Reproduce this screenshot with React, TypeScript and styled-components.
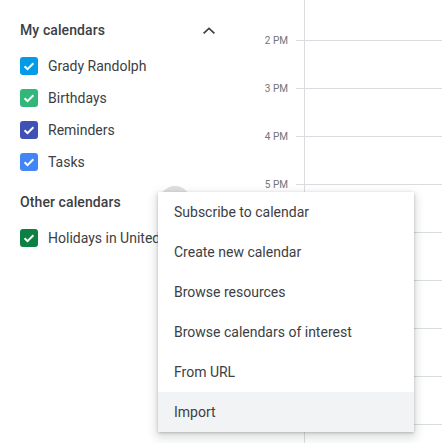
import React from 'react';
import styled, { createGlobalStyle } from 'styled-components';

const GlobalStyle = createGlobalStyle`
  html, body {
    margin: 0;
    padding: 0;
    background: #ffffff;
  }
  body {
    font-family: Roboto, "Noto Sans", Arial, sans-serif;
    color: #3c4043;
  }
`;

const Page = styled.div`
  position: relative;
  display: flex;
  flex-direction: row;
  width: 442px;
  height: 443px;
  overflow: hidden;
  background: #ffffff;
`;

const Sidebar = styled.aside`
  box-sizing: border-box;
  flex: 0 0 256px;
  padding-top: 10px;
  display: flex;
  flex-direction: column;
`;

const SectionHeader = styled.div<{ $gap?: number }>`
  box-sizing: border-box;
  height: 40px;
  margin-top: ${(p) => p.$gap ?? 0}px;
  padding: 0 35px 0 20px;
  display: flex;
  align-items: center;
  gap: 6px;
`;

const SectionTitle = styled.span`
  flex: 1;
  font-size: 14px;
  font-weight: 500;
  letter-spacing: 0.1px;
  color: #3c4043;
  white-space: nowrap;
`;

const HoverCircle = styled.span`
  width: 32px;
  height: 32px;
  border-radius: 50%;
  background: #dedfe0;
`;

const IconButton = styled.span`
  width: 24px;
  height: 24px;
  display: flex;
  align-items: center;
  justify-content: center;
  color: #3c4043;
`;

const CalendarRow = styled.div`
  box-sizing: border-box;
  height: 32px;
  padding-left: 20px;
  display: flex;
  align-items: center;
  gap: 10px;
`;

const Box = styled.span<{ $color: string }>`
  flex: 0 0 18px;
  width: 18px;
  height: 18px;
  border-radius: 3px;
  background: ${(p) => p.$color};
  display: flex;
  align-items: center;
  justify-content: center;
`;

const CalendarName = styled.span`
  font-size: 14px;
  color: #3c4043;
  white-space: nowrap;
`;

const Gutter = styled.div`
  flex: 0 0 48px;
  display: flex;
  flex-direction: column;
  margin-top: -7px;
`;

const GutterRow = styled.div`
  flex: 0 0 48px;
  display: flex;
  align-items: flex-end;
`;

const HourLabel = styled.span`
  flex: 1;
  height: 10px;
  line-height: 10px;
  margin-bottom: -5px;
  padding-right: 8px;
  text-align: right;
  font-size: 10px;
  color: #70757a;
  white-space: nowrap;
`;

const Tick = styled.span`
  box-sizing: border-box;
  flex: 0 0 8px;
  height: 1px;
  background: #dadce0;
`;

const Grid = styled.div`
  flex: 1;
  display: flex;
  flex-direction: column;
  margin-top: -7px;
  border-left: 1px solid #dadce0;
`;

const GridRow = styled.div`
  box-sizing: border-box;
  flex: 0 0 48px;
  border-bottom: 1px solid #dadce0;
`;

const Menu = styled.ul`
  position: absolute;
  left: 158px;
  top: 192px;
  width: 256px;
  margin: 0;
  padding: 0;
  list-style: none;
  background: #ffffff;
  border-radius: 2px;
  box-shadow: 0 4px 8px 3px rgba(60, 64, 67, 0.15), 0 1px 3px rgba(60, 64, 67, 0.3);
  z-index: 5;
`;

const MenuItem = styled.li<{ $active?: boolean }>`
  box-sizing: border-box;
  height: 40px;
  padding: 0 16px;
  display: flex;
  align-items: center;
  font-size: 14px;
  color: #3c4043;
  background: ${(p) => (p.$active ? '#f1f3f4' : '#ffffff')};
  white-space: nowrap;
`;

const Check = () => (
  <svg width="14" height="14" viewBox="0 0 14 14" fill="none">
    <path d="M2.6 7.2l2.9 2.9L11.4 4.2" stroke="#ffffff" strokeWidth="2" />
  </svg>
);

const ChevronUp = () => (
  <svg width="24" height="24" viewBox="0 0 24 24" fill="currentColor">
    <path d="M12 9.2l-6 5.6 1.2 1.2L12 11.5l4.8 4.5L18 14.8z" />
  </svg>
);

const myCalendars = [
  { name: 'Grady Randolph', color: '#039be5' },
  { name: 'Birthdays', color: '#33b679' },
  { name: 'Reminders', color: '#3f51b5' },
  { name: 'Tasks', color: '#4285f4' },
];

const otherCalendars = [{ name: 'Holidays in United States', color: '#0b8043' }];

// later hours sit under the open menu, so only the visible labels are printed
const hours = ['2 PM', '3 PM', '4 PM', '5 PM', '', '', '', '', '', ''];

const menuItems = [
  'Subscribe to calendar',
  'Create new calendar',
  'Browse resources',
  'Browse calendars of interest',
  'From URL',
  'Import',
];

export default function App() {
  return (
    <>
      <GlobalStyle />
      <Page>
        <Sidebar>
          <SectionHeader>
            <SectionTitle>My calendars</SectionTitle>
            <IconButton>
              <ChevronUp />
            </IconButton>
          </SectionHeader>
          {myCalendars.map((c) => (
            <CalendarRow key={c.name}>
              <Box $color={c.color}>
                <Check />
              </Box>
              <CalendarName>{c.name}</CalendarName>
            </CalendarRow>
          ))}
          <SectionHeader $gap={4}>
            <SectionTitle>Other calendars</SectionTitle>
            <HoverCircle />
            <IconButton>
              <ChevronUp />
            </IconButton>
          </SectionHeader>
          {otherCalendars.map((c) => (
            <CalendarRow key={c.name}>
              <Box $color={c.color}>
                <Check />
              </Box>
              <CalendarName>{c.name}</CalendarName>
            </CalendarRow>
          ))}
        </Sidebar>
        <Gutter>
          {hours.map((h, i) => (
            <GutterRow key={i}>
              <HourLabel>{h}</HourLabel>
              <Tick />
            </GutterRow>
          ))}
        </Gutter>
        <Grid>
          {hours.map((_, i) => (
            <GridRow key={i} />
          ))}
        </Grid>
        <Menu>
          {menuItems.map((m) => (
            <MenuItem key={m} $active={m === 'Import'}>
              {m}
            </MenuItem>
          ))}
        </Menu>
      </Page>
    </>
  );
}
